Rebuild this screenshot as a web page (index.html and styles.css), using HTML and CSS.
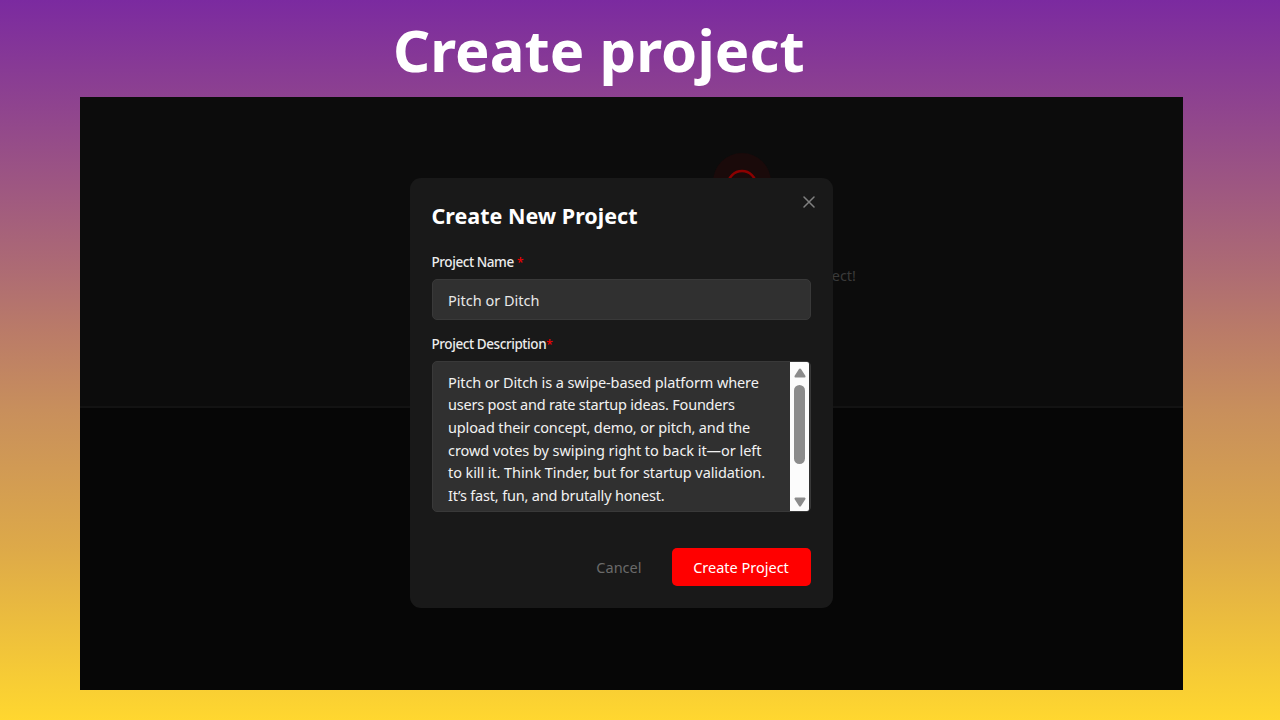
FILE: index.html
```html
<!DOCTYPE html>
<html lang="en">
<head>
	<meta charset="utf-8">
	<title>Create project</title>
	<link rel="stylesheet" href="styles.css">
</head>
<body>
	<h1 class="slide-title">Create project</h1>

	<div class="app">
		<div class="hero">
			<div class="hero-icon">
				<svg width="32" height="32" viewBox="0 0 32 32" fill="none" stroke="#8c0000" stroke-width="2.4">
					<circle cx="16" cy="16" r="14"/>
				</svg>
			</div>
			<p class="hero-text">Create your first project!</p>
		</div>

		<div class="modal">
			<button class="close" type="button" aria-label="Close">
				<svg width="12" height="12" viewBox="0 0 12 12" stroke="#808080" stroke-width="1.5" stroke-linecap="round">
					<path d="M1 1L11 11M11 1L1 11"/>
				</svg>
			</button>
			<h2 class="modal-title">Create New Project</h2>

			<div class="label">Project Name <span class="required">*</span></div>
			<div class="field">Pitch or Ditch</div>

			<div class="label label-desc">Project Description<span class="required">*</span></div>
			<div class="field area">
				<div class="area-text">
					<div class="l1">Pitch or Ditch is a swipe-based platform where</div>
					<div class="l2">users post and rate startup ideas. Founders</div>
					<div class="l3">upload their concept, demo, or pitch, and the</div>
					<div class="l4">crowd votes by swiping right to back it—or left</div>
					<div class="l5">to kill it. Think Tinder, but for startup validation.</div>
					<div class="l6">It’s fast, fun, and brutally honest.</div>
				</div>
				<div class="scrollbar">
					<svg width="12" height="10" viewBox="0 0 12 10" fill="#8b8b8b"><path d="M6 0.5Q6.7 0.5 7 1L11.5 8Q11.8 9.5 10.5 9.5H1.5Q0.2 9.5 0.5 8L5 1Q5.3 0.5 6 0.5Z"/></svg>
					<div class="thumb"></div>
					<svg class="down" width="12" height="10" viewBox="0 0 12 10" fill="#8b8b8b"><path d="M6 9.5Q6.7 9.5 7 9L11.5 2Q11.8 0.5 10.5 0.5H1.5Q0.2 0.5 0.5 2L5 9Q5.3 9.5 6 9.5Z"/></svg>
				</div>
			</div>

			<div class="actions">
				<button class="btn" type="button">Cancel</button>
				<button class="btn primary" type="button">Create Project</button>
			</div>
		</div>
	</div>
</body>
</html>
```
FILE: styles.css
```css
* {
	box-sizing: border-box;
}

body {
	margin: 0;
	height: 720px;
	overflow: hidden;
	background: linear-gradient(#7b2aa0 0%, #ae6c73 38%, #ba7b68 46%, #c88f5c 57%, #dda949 76%, #ffd72f 100%);
	font-family: "Noto Sans", "Open Sans", sans-serif;
	color: #fff;
}

.slide-title {
	margin: 0;
	height: 97px;
	padding: 9px 0 0 393px;
	font-size: 58px;
	line-height: 82px;
	font-weight: 700;
	letter-spacing: 0.05px;
	white-space: nowrap;
}

.app {
	position: relative;
	width: 1102.5px;
	height: 593px;
	margin-left: 80px;
	background: #060606;
}

.hero {
	height: 311px;
	padding: 56px 0 0 633px;
	background: #0c0c0c;
	border-bottom: 2px solid #131313;
}

.hero-icon {
	display: flex;
	justify-content: center;
	padding-top: 16px;
	width: 58px;
	height: 58px;
	border-radius: 50%;
	background: #1a0a0a;
}

.hero-text {
	width: 143px;
	margin: 53px 0 0;
	display: flex;
	justify-content: flex-end;
	font-size: 14.5px;
	line-height: 22px;
	color: #3a3a3a;
	white-space: nowrap;
}

/* dialog over the page */
.modal {
	position: absolute;
	left: 329.5px;
	top: 80.5px;
	width: 423.5px;
	height: 430.5px;
	padding: 22px 22.5px 0 22px;
	background: #191919;
	border-radius: 11px;
}

.close {
	position: absolute;
	right: 18.5px;
	top: 18px;
	padding: 0;
	border: 0;
	background: none;
	line-height: 0;
}

.modal-title {
	margin: 0 0 18px;
	font-size: 21.5px;
	line-height: 32px;
	font-weight: 700;
}

.label {
	height: 22px;
	margin-bottom: 7px;
	font-size: 13.5px;
	line-height: 25px;
	font-weight: 500;
	letter-spacing: -0.42px;
	color: #ececec;
}

.required {
	font-size: 12px;
	color: #f00000;
}

.field {
	height: 41px;
	padding: 0 15.5px;
	border: 1px solid #393939;
	border-radius: 5px;
	background: #303030;
	font-size: 14.5px;
	line-height: 40px;
	color: #e8e8e8;
	white-space: nowrap;
}

.label-desc {
	margin-top: 12px;
}

.area {
	display: flex;
	justify-content: space-between;
	height: 151px;
	padding: 0 0 0 15.5px;
}

.area-text {
	padding-top: 9px;
	line-height: 22.7px;
	color: #f2f2f2;
}

/* tracking per line of the description */
.l1 { letter-spacing: -0.11px; }
.l2 { letter-spacing: -0.22px; }
.l3 { letter-spacing: -0.13px; }
.l4 { letter-spacing: -0.05px; }
.l5 { letter-spacing: -0.09px; }
.l6 { letter-spacing: -0.19px; }

.scrollbar {
	display: flex;
	flex-direction: column;
	align-items: center;
	width: 19px;
	margin-right: 0.5px;
	padding: 6px 0 4px;
	border-radius: 0 2px 2px 0;
	background: #fcfcfc;
}

.thumb {
	width: 11px;
	height: 79px;
	margin-top: 7px;
	border-radius: 6px;
	background: #8b8b8b;
}

.down {
	margin-top: auto;
}

.actions {
	display: flex;
	justify-content: flex-end;
	margin-top: 36px;
}

.btn {
	height: 38px;
	padding: 0 22px;
	border: 0;
	border-radius: 5px;
	background: none;
	font-family: inherit;
	font-size: 14.5px;
	color: #6a6a6a;
}

.primary {
	width: 139px;
	margin-left: 8px;
	padding: 0;
	background: #ff0000;
	color: #fff;
}
```
